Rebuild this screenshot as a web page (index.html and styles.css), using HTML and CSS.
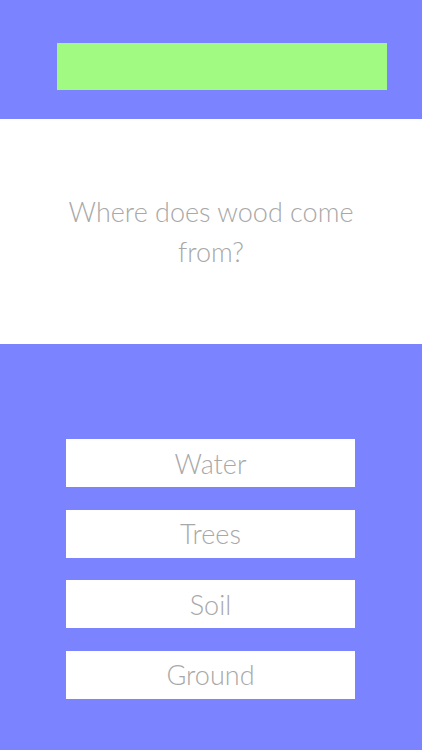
FILE: index.html
```html
<!DOCTYPE html>
<html lang="en">
<head>
    <meta charset="UTF-8">
    <meta name="viewport" content="width=device-width, initial-scale=1.0">
    <title>Quiz</title>
    <link rel="stylesheet" href="styles.css">
</head>
<body>

    <header class="top">
        <div class="progress"></div>
    </header>

    <section class="question">
        <p>Where does wood come from?</p>
    </section>

    <main class="answers">
        <button class="answer">Water</button>
        <button class="answer">Trees</button>
        <button class="answer">Soil</button>
        <button class="answer">Ground</button>
    </main>

</body>
</html>
```

FILE: styles.css
```css
body { margin: 0; background: #7b83ff; font-family: Lato, "Open Sans", sans-serif; font-weight: 300; color: #a8a8a8; height: 750px; overflow: hidden; }

.top { height: 119px; padding: 43px 0 0 57px; box-sizing: border-box; }
.progress { width: 330px; height: 47px; background: #a1fb82; }

.question { background: #fff; height: 225px; display: flex; align-items: center; justify-content: center; padding: 0 60px; box-sizing: border-box; }
.question p { margin: 0; text-align: center; font-size: 27px; line-height: 40px; }

.answers { display: flex; flex-direction: column; align-items: center; gap: 22.5px; padding-top: 95px; }
.answer { width: 289px; height: 48px; background: #fff; border: none; border-radius: 0; padding: 0; margin-left: -1px; font-family: inherit; font-weight: 300; font-size: 27px; color: #a8a8a8; }
```
